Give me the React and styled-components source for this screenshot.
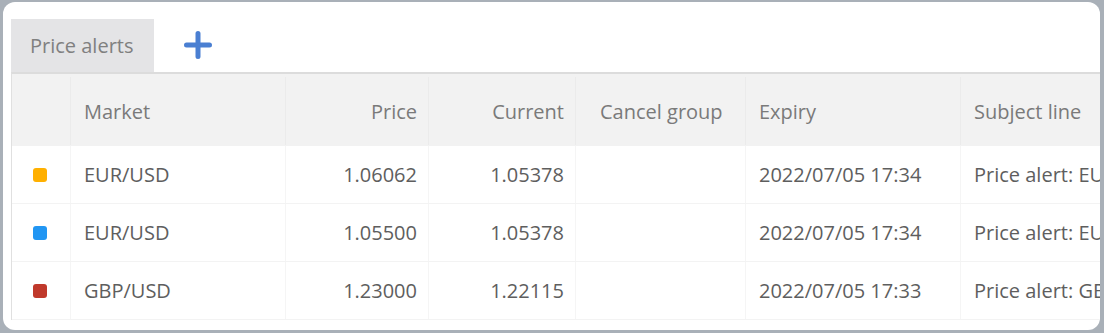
import React from 'react';
import styled, { createGlobalStyle } from 'styled-components';

const GlobalStyle = createGlobalStyle`
    html, body {
        margin: 0;
        padding: 0;
        background: #a9b0b8;
        font-family: "Open Sans", "Noto Sans", sans-serif;
    }
`;

const Frame = styled.div`
    width: 1104px;
    height: 333px;
    padding: 2px 4px 3px 3px;
    box-sizing: border-box;
`;

const Panel = styled.div`
    height: 100%;
    background: #ffffff;
    border-radius: 12px;
    overflow: hidden;
    padding: 17px 0 0 8px;
    box-sizing: border-box;
`;

const TabBar = styled.div`
    display: flex;
    align-items: center;
    height: 53px;
`;

const Tab = styled.div`
    height: 100%;
    display: flex;
    align-items: center;
    padding: 0 20px 0 19px;
    background: #e4e4e6;
    color: #808080;
    font-size: 20px;
`;

const AddButton = styled.button`
    border: none;
    background: none;
    padding: 0;
    margin: 0 0 2px 30px;
    display: flex;
    cursor: pointer;
`;

const Table = styled.div`
    border-top: 2px solid #dcdcdc;
    border-left: 1px solid #e0e0e0;
    width: 1200px;
`;

const Row = styled.div`
    display: grid;
    grid-template-columns: 59px 215px 143px 147px 170px 215px 300px;
    box-sizing: border-box;
    height: ${p => (p.$head ? '72px' : '58px')};
    padding-top: ${p => (p.$head ? '3px' : '0')};
    background: ${p => (p.$head ? '#f2f2f2' : '#ffffff')};
    border-bottom: 1px solid ${p => (p.$head ? '#f2f2f2' : '#f3f3f3')};
    color: ${p => (p.$head ? '#7a7a7a' : '#5e5e5e')};
    font-size: 20px;
`;

const Cell = styled.div`
    display: flex;
    align-items: center;
    justify-content: ${p => (p.$right ? 'flex-end' : 'flex-start')};
    padding: ${p => (p.$right ? '0 11px 0 0' : '0 0 0 13px')};
    border-right: 1px solid ${p => (p.$head ? '#ebebeb' : '#f5f5f5')};
    white-space: nowrap;
    overflow: hidden;
`;

const Swatch = styled.span`
    width: 14px;
    height: 14px;
    border-radius: 3px;
    margin-left: 8px;
    background: ${p => p.$color};
`;

const alerts = [
    { color: '#ffb000', market: 'EUR/USD', price: '1.06062', current: '1.05378', expiry: '2022/07/05 17:34', subject: 'Price alert: EUR/USD' },
    { color: '#2196f3', market: 'EUR/USD', price: '1.05500', current: '1.05378', expiry: '2022/07/05 17:34', subject: 'Price alert: EUR/USD' },
    { color: '#c0392b', market: 'GBP/USD', price: '1.23000', current: '1.22115', expiry: '2022/07/05 17:33', subject: 'Price alert: GBP/USD' },
];

const PlusIcon = () => (
    <svg width="28" height="28" viewBox="0 0 28 28">
        <path d="M14 2.5v23M2.5 14h23" stroke="#4a7fd2" strokeWidth="5" strokeLinecap="round" />
    </svg>
);

const App = () => {
    return (
        <Frame>
            <GlobalStyle />
            <Panel>
                <TabBar>
                    <Tab>Price alerts</Tab>
                    <AddButton aria-label="Add alert"><PlusIcon /></AddButton>
                </TabBar>
                <Table>
                    <Row $head>
                        <Cell $head />
                        <Cell $head>Market</Cell>
                        <Cell $head $right>Price</Cell>
                        <Cell $head $right>Current</Cell>
                        <Cell $head style={{ paddingLeft: 24 }}>Cancel group</Cell>
                        <Cell $head>Expiry</Cell>
                        <Cell $head>Subject line</Cell>
                    </Row>
                    {alerts.map((a, i) => (
                        <Row key={i}>
                            <Cell><Swatch $color={a.color} /></Cell>
                            <Cell>{a.market}</Cell>
                            <Cell $right>{a.price}</Cell>
                            <Cell $right>{a.current}</Cell>
                            <Cell />
                            <Cell>{a.expiry}</Cell>
                            <Cell>{a.subject}</Cell>
                        </Row>
                    ))}
                </Table>
            </Panel>
        </Frame>
    );
};

export default App;
